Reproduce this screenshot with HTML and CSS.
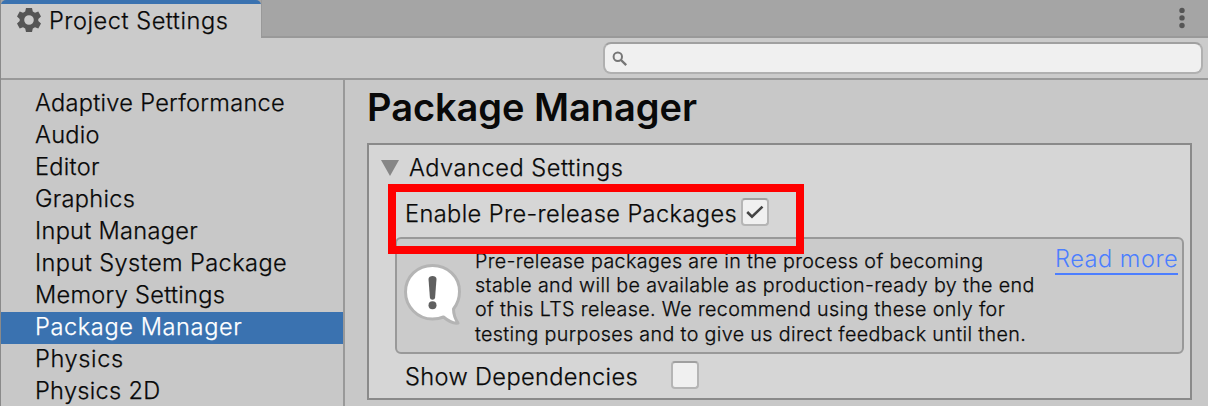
FILE: index.html
```html
<!DOCTYPE html>
<html lang="en">
<head>
<meta charset="utf-8">
<title>Project Settings</title>
<link rel="stylesheet" href="styles.css">
</head>
<body>
<div class="window">
  <header class="tabbar">
    <div class="tab">
      <svg class="gear" width="24" height="24" viewBox="0 0 24 24"><path fill="#555" fill-rule="evenodd" d="M9 0H15L15.8 3.6L18 4.8L21.3 3.6L24 8.6L21.3 11V13L24 15.4L21.3 20.4L18 19.2L15.8 20.4L15 24H9L8.2 20.4L6 19.2L2.7 20.4L0 15.4L2.7 13V11L0 8.6L2.7 3.6L6 4.8L8.2 3.6ZM12 7.2A4.8 4.8 0 1 0 12 16.8A4.8 4.8 0 1 0 12 7.2Z"/></svg>
      <span class="tab-title">Project Settings</span>
    </div>
    <div class="tab-rest">
      <svg width="6" height="22" viewBox="0 0 6 22" fill="#555"><circle cx="3" cy="3.4" r="2.7"/><circle cx="3" cy="10.9" r="2.7"/><circle cx="3" cy="18.5" r="2.7"/></svg>
    </div>
  </header>
  <div class="toolbar">
    <div class="search">
      <svg width="16" height="16" viewBox="0 0 16 16" fill="none" stroke="#767676"><circle cx="5.8" cy="5.8" r="4.2" stroke-width="2"/><path d="M9 9L14.2 14.2" stroke-width="2.4"/></svg>
    </div>
  </div>
  <div class="content">
    <nav class="sidebar">
      <div class="item">Adaptive Performance</div>
      <div class="item">Audio</div>
      <div class="item">Editor</div>
      <div class="item">Graphics</div>
      <div class="item">Input Manager</div>
      <div class="item wide">Input System Package</div>
      <div class="item">Memory Settings</div>
      <div class="item loose selected">Package Manager</div>
      <div class="item loose">Physics</div>
      <div class="item">Physics 2D</div>
    </nav>
    <main class="main">
      <h1 class="heading">Package Manager</h1>
      <section class="panel">
        <div class="foldout">
          <svg class="arrow" width="18" height="16" viewBox="0 0 18 16"><path d="M0 0H18L9 16Z" fill="#868686"/></svg>
          <span>Advanced Settings</span>
        </div>
        <div class="option prerelease">
          <span class="label">Enable Pre-release Packages</span>
          <span class="checkbox"><svg width="18" height="14" viewBox="0 0 18 14" fill="none" stroke="#444" stroke-width="2.6"><path d="M1.2 7L6 11.6L16.5 1.6"/></svg></span>
          <div class="highlight"></div>
        </div>
        <div class="helpbox">
          <svg class="bubble" width="62" height="66" viewBox="0 0 62 66">
            <path d="M30.500 3.500C45.500 3.500 57.500 14.500 57.500 29.500C57.500 36.500 55 42.500 51.500 47C51.500 52.500 53 56.500 56 61C50 62 45 58 41.500 55C38 56.500 35 57 30.500 57C15.500 57 3.500 44.500 3.500 30C3.500 14.500 15.500 3.500 30.500 3.500Z" fill="#fff" stroke="#b4b4b4" stroke-width="3" stroke-linejoin="round"/>
            <path d="M26.500 17C26.500 13 34.500 13 34.500 17L33.100 35.500C32.700 38.500 28.300 38.500 27.900 35.500Z" fill="#606060"/>
            <circle cx="30.500" cy="43.200" r="4" fill="#606060"/>
          </svg>
          <p class="message">Pre-release packages are in the process of becoming<br>stable and will be available as production-ready by the end<br>of this LTS release. We recommend using these only for<br>testing purposes and to give us direct feedback until then.</p>
          <a class="link">Read more</a>
        </div>
        <div class="option deps">
          <span class="label">Show Dependencies</span>
          <span class="checkbox"></span>
        </div>
      </section>
    </main>
  </div>
</div>
</body>
</html>
```
FILE: styles.css
```css
* { box-sizing: border-box; }
body {
  margin: 0;
  background: #c8c8c8;
  color: #090909;
  font: 350 23.6px/32px Inter, "Liberation Sans", sans-serif;
  letter-spacing: 0.53px;
  -webkit-text-stroke: 0.25px currentColor;
  white-space: nowrap;
}
svg { display: block; flex: none; }
.window {
  width: 1208px;
  height: 406px;
  display: flex;
  flex-direction: column;
  overflow: hidden;
  border-left: 1px solid #8a8a8a;
}
.tabbar { display: flex; height: 38px; flex: none; background: #a5a5a5; }
.tab {
  width: 260px;
  display: flex;
  align-items: flex-start;
  padding: 4px 0 0 16px;
  gap: 8px;
  background: linear-gradient(#3a72b0 4px, #cbcbcb 4px);
  border-radius: 5px 5px 0 0;
}
.gear { margin-top: 4px; }
.tab-title { line-height: 34px; }
.tab-rest {
  flex: 1;
  display: flex;
  justify-content: flex-end;
  padding: 7px 23px 0 0;
  border-left: 1px solid #999;
  border-bottom: 2px solid #999;
}
.toolbar {
  height: 42px;
  flex: none;
  display: flex;
  justify-content: flex-end;
  padding: 4px 5px 0 0;
  background: #cbcbcb;
  border-bottom: 2px solid #999;
}
.search {
  width: 600px;
  height: 32px;
  padding: 7px 0 0 7px;
  background: #f0f0f0;
  border: 2px solid #b0b0b0;
  border-top-color: #a0a0a0;
  border-radius: 8px;
}
.content { flex: 1; display: flex; min-height: 0; }
.sidebar {
  width: 344px;
  flex: none;
  padding-top: 8px;
  border-right: 2px solid #999;
}
.item {
  height: 32px;
  padding-left: 34px;
  line-height: 30px;
  letter-spacing: 0.28px;
}
.wide { letter-spacing: 0.4px; }
.loose { letter-spacing: 0.6px; }
.selected { background: #3a72b0; color: #fff; }
.main { flex: 1; min-width: 0; padding: 0 16px 0 22px; }
.heading {
  margin: 0;
  height: 63px;
  font-size: 38px;
  font-weight: 600;
  line-height: 55px;
  letter-spacing: -0.05px;
  -webkit-text-stroke: 0;
}
.panel {
  height: 257px;
  padding: 8px 6px 0 12px;
  background: #d6d6d6;
  border: 2px solid #8a8a8a;
}
.foldout { display: flex; align-items: center; height: 30px; gap: 10px; }
.option { display: flex; padding-left: 24px; }
.prerelease { position: relative; height: 54px; padding-top: 15px; }
.prerelease .label { width: 336px; letter-spacing: 0.4px; }
.highlight {
  position: absolute;
  left: 7px;
  top: 1px;
  width: 416px;
  height: 70px;
  border: 8px solid #f00;
}
.checkbox {
  display: flex;
  align-items: center;
  justify-content: center;
  width: 28px;
  height: 28px;
  background: #f0f0f0;
  border: 2px solid #b5b5b5;
  border-top-color: #a0a0a0;
  border-radius: 4px;
}
.helpbox {
  display: flex;
  height: 117px;
  margin-left: 14px;
  padding: 10px 4px 0 5px;
  background: #cbcbcb;
  border: 2px solid #999;
  border-radius: 6px;
}
.bubble { margin-top: 13px; }
.message {
  width: 580px;
  flex: none;
  margin: 0 0 0 11px;
  font-size: 19.7px;
  line-height: 24.200px;
  letter-spacing: 0.36px;
}
.link {
  width: 123px;
  height: 26px;
  line-height: 20px;
  color: #4c7eff;
  letter-spacing: 0.5px;
  border-bottom: 2px solid #4c7eff;
  -webkit-text-stroke: 0;
}
.deps { padding-top: 7px; }
.deps .label { width: 266px; line-height: 31px; letter-spacing: 0.36px; }
```
